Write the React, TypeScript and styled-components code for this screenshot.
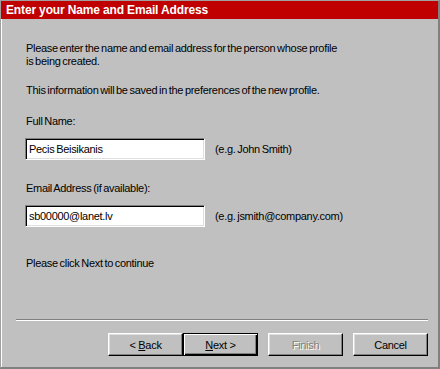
import React from "react";
import styled, { createGlobalStyle } from "styled-components";

const Global = createGlobalStyle`
  html, body { margin: 0; padding: 0; background: #c0c0c0; }
  * { box-sizing: border-box; }
  body {
    font-family: "Liberation Sans", Arial, sans-serif;
    font-size: 11px;
    color: #000;
    letter-spacing: -0.3px;
    word-spacing: -1px;
  }
`;

const Frame = styled.div`
  width: 440px;
  height: 369px;
  display: flex;
  flex-direction: column;
  background: #c0c0c0;
  border-top: 1px solid #a0a0a0;
  border-left: 1px solid #a0a0a0;
  border-right: 2px solid #808080;
  border-bottom: 2px solid #808080;
`;

const Header = styled.div`
  height: 18px;
  flex: none;
  background: #c00000;
  color: #fff;
  font-weight: bold;
  font-size: 12px;
  letter-spacing: -0.15px;
  word-spacing: 0;
  line-height: 18px;
  padding-left: 5px;
  white-space: nowrap;
`;

const Body = styled.div`
  flex: 1;
  display: flex;
  flex-direction: column;
  border-left: 1px solid #fff;
  padding: 23px 0 0 24px;
`;

const Text = styled.p<{ $mt?: number }>`
  margin: ${(p) => p.$mt ?? 0}px 0 0 0;
  line-height: 13px;
  font-size: 11px;
`;

const FieldRow = styled.div<{ $mt?: number }>`
  display: flex;
  align-items: center;
  margin-top: ${(p) => p.$mt ?? 0}px;
  margin-left: -1px;
`;

const Field = styled.input`
  width: 180px;
  height: 22px;
  background: #fff;
  border-style: solid;
  border-width: 1px;
  border-color: #808080 #fff #fff #808080;
  box-shadow: inset 1px 1px #000, inset -1px -1px #dfdfdf;
  font-family: "Liberation Sans", Arial, sans-serif;
  font-size: 11px;
  letter-spacing: -0.3px;
  word-spacing: -1px;
  padding: 0 3px;
  color: #000;
  outline: none;
`;

const Hint = styled.span`
  margin-left: 10px;
  line-height: 13px;
`;

const Spacer = styled.div`
  flex: 1;
`;

const Separator = styled.div`
  height: 2px;
  margin: 0 10px 12px -10px;
  border-top: 1px solid #808080;
  border-bottom: 1px solid #fff;
`;

const Footer = styled.div`
  display: flex;
  justify-content: flex-end;
  gap: 10px;
  padding: 0 10px 11px 0;
`;

const Pair = styled.div`
  display: flex;
`;

const Button = styled.button<{ $default?: boolean }>`
  width: 75px;
  height: 23px;
  padding: 0;
  background: #c0c0c0;
  font-family: "Liberation Sans", Arial, sans-serif;
  font-size: 11px;
  letter-spacing: -0.3px;
  color: #000;
  border-style: solid;
  border-width: 1px;
  border-color: ${(p) => (p.$default ? "#000" : "#fff #000 #000 #fff")};
  box-shadow: ${(p) =>
    p.$default
      ? "inset 1px 1px #fff, inset -1px -1px #000, inset -2px -2px #808080"
      : "inset -1px -1px #808080, inset 1px 1px #dfdfdf"};
  &:disabled {
    color: #808080;
    text-shadow: 1px 1px #fff;
  }
  u {
    text-decoration: underline;
  }
`;

export default function App() {
  return (
    <>
      <Global />
      <Frame>
        <Header>Enter your Name and Email Address</Header>
        <Body>
          <Text>
            Please enter the name and email address for the person whose profile
            <br />
            is being created.
          </Text>
          <Text $mt={16}>This information will be saved in the preferences of the new profile.</Text>
          <Text $mt={18}>Full Name:</Text>
          <FieldRow $mt={10}>
            <Field defaultValue="Pecis Beisikanis" />
            <Hint>(e.g. John Smith)</Hint>
          </FieldRow>
          <Text $mt={22}>Email Address (if available):</Text>
          <FieldRow $mt={10}>
            <Field defaultValue="sb00000@lanet.lv" />
            <Hint>(e.g. jsmith@company.com)</Hint>
          </FieldRow>
          <Text $mt={30}>Please click Next to continue</Text>
          <Spacer />
          <Separator />
          <Footer>
            <Pair>
              <Button>
                &lt; <u>B</u>ack
              </Button>
              <Button $default>
                <u>N</u>ext &gt;
              </Button>
            </Pair>
            <Button disabled>Finish</Button>
            <Button>Cancel</Button>
          </Footer>
        </Body>
      </Frame>
    </>
  );
}
